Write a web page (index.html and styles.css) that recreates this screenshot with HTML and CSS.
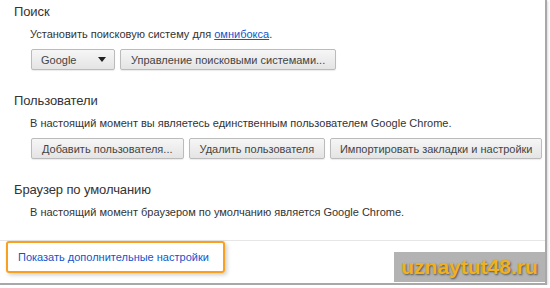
FILE: index.html
```html
<!DOCTYPE html>
<html lang="ru">
<head>
<meta charset="UTF-8">
<title>Настройки</title>
<link rel="stylesheet" href="styles.css">
</head>
<body>
<div class="page">
  <section class="group">
    <h2>Поиск</h2>
    <p class="desc">Установить поисковую систему для <a href="#">омнибокса</a>.</p>
    <div class="row">
      <span class="btn select">Google <span class="arrow"></span></span>
      <span class="btn">Управление поисковыми системами...</span>
    </div>
  </section>

  <section class="group">
    <h2>Пользователи</h2>
    <p class="desc">В настоящий момент вы являетесь единственным пользователем Google Chrome.</p>
    <div class="row">
      <span class="btn">Добавить пользователя...</span>
      <span class="btn">Удалить пользователя</span>
      <span class="btn wide">Импортировать закладки и настройки</span>
    </div>
  </section>

  <section class="group last">
    <h2>Браузер по умолчанию</h2>
    <p class="desc">В настоящий момент браузером по умолчанию является Google Chrome.</p>
  </section>

  <div class="more">
    <a class="more-link" href="#">Показать дополнительные настройки</a>
  </div>

  <div class="mark">uznaytut48.ru</div>
</div>
</body>
</html>
```

FILE: styles.css
```css
*{box-sizing:border-box;margin:0;padding:0}
body{background:#fff;font-family:"Liberation Sans",Arial,sans-serif;color:#303030}
.page{position:relative;width:547px;height:285px;border-right:2px solid #a8a8a8;border-bottom:2px solid #a8a8a8;box-shadow:1px 1px 2px rgba(0,0,0,.15)}
.group{padding:3px 0 19px 14px}
.group.last{padding-bottom:13px}
h2{font-size:13px;font-weight:normal;line-height:18px;color:#333;margin-bottom:5px;letter-spacing:-.1px}
.desc{font-size:11px;line-height:16px;padding-left:16px;color:#333;margin-bottom:7px;white-space:nowrap}
.desc a{color:#15c}
.row{display:flex;gap:5px;padding-left:17px}
.btn{display:inline-flex;align-items:center;height:21px;padding:0 10px;font-size:11px;color:#444;white-space:nowrap;
  border:1px solid #bbb;border-radius:2px;background:linear-gradient(#f6f6f6,#e4e4e4);
  box-shadow:0 1px 1px rgba(0,0,0,.08)}
.btn.wide{width:212px;justify-content:center}
.select{width:84px;padding:0 8px 0 9px;justify-content:space-between}
.arrow{width:0;height:0;border-left:4px solid transparent;border-right:4px solid transparent;border-top:5px solid #222}
.more{border-top:1px solid #e6e6e6;padding:0 0 0 6px}
.more-link{display:inline-block;width:219px;height:32px;padding:0 0 0 10px;line-height:29px;font-size:11px;color:#15c;text-decoration:none;white-space:nowrap;
  border:2px solid #f9a020;border-radius:3px;box-shadow:2px 2px 4px rgba(0,0,0,.2)}
.mark{position:absolute;right:0;bottom:1px;width:151px;height:30px;background:#b3b3b3;
  font-size:21px;font-weight:bold;line-height:30px;text-align:center;color:#f1b020;
  text-shadow:1px 1px 2px #555}
```
